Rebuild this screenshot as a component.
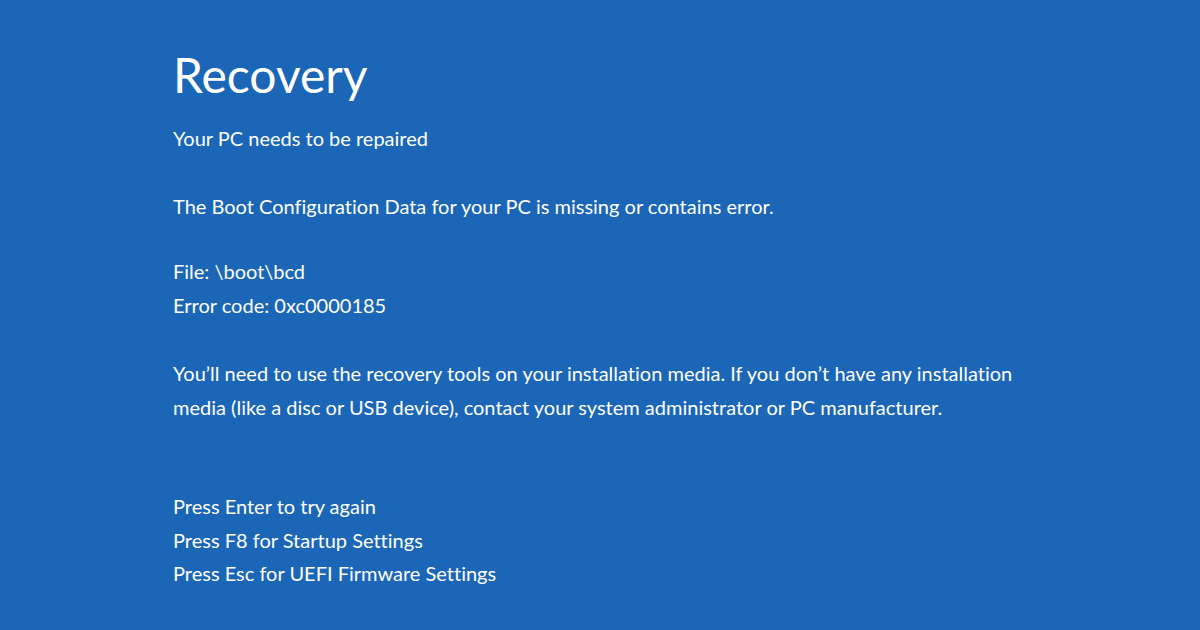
import React from 'react';

const ACTIONS = ['Press Enter to try again', 'Press F8 for Startup Settings', 'Press Esc for UEFI Firmware Settings'];

export default function App() {
  return (
    <div
      className="w-[1200px] h-[630px] bg-[#1b66b6] text-white overflow-hidden pl-[173px] pt-[47px] [font-variant-ligatures:none]"
      style={{ fontFamily: 'Lato, "Open Sans", sans-serif' }}
    >
      <h1 className="text-[48px] leading-[56px] font-normal">Recovery</h1>

      <div className="text-[20px] leading-[34px] mt-[18px]">
        <p>Your PC needs to be repaired</p>
        <p className="mt-[34px]">The Boot Configuration Data for your PC is missing or contains error.</p>

        {/* file + code */}
        <div className="mt-[31px]">
          <p>File: \boot\bcd</p>
          <p>Error code: 0xc0000185</p>
        </div>

        <p className="mt-[34px] w-[860px]">
          You’ll need to use the recovery tools on your installation media. If you don’t have any installation
          media (like a disc or USB device), contact your system administrator or PC manufacturer.
        </p>

        <div className="mt-[66px]">
          {ACTIONS.map((a) => (
            <p key={a} className="leading-[33.5px]">{a}</p>
          ))}
        </div>
      </div>
    </div>
  );
}
